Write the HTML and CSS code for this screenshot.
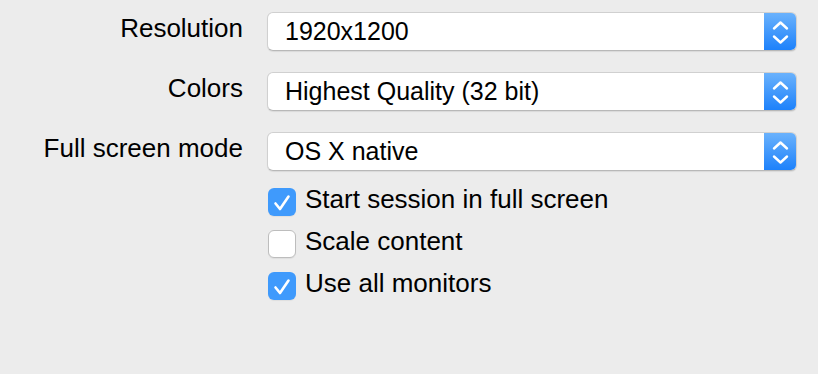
FILE: index.html
```html
<!DOCTYPE html>
<html>
<head>
<meta charset="utf-8">
<link rel="stylesheet" href="styles.css">
</head>
<body>
<div class="panel">
  <div class="form">
    <div class="label">Resolution</div>
    <div class="popup"><span class="value">1920x1200</span><span class="stepper"><svg width="33" height="39" viewBox="0 0 33 39"><path d="M10 16.5 L16.5 10.5 L23 16.5" fill="none" stroke="#fff" stroke-width="2.4" stroke-linecap="round" stroke-linejoin="round"/><path d="M10 24.5 L16.5 30.5 L23 24.5" fill="none" stroke="#fff" stroke-width="2.4" stroke-linecap="round" stroke-linejoin="round"/></svg></span></div>
    <div class="label">Colors</div>
    <div class="popup"><span class="value">Highest Quality (32 bit)</span><span class="stepper"><svg width="33" height="39" viewBox="0 0 33 39"><path d="M10 16.5 L16.5 10.5 L23 16.5" fill="none" stroke="#fff" stroke-width="2.4" stroke-linecap="round" stroke-linejoin="round"/><path d="M10 24.5 L16.5 30.5 L23 24.5" fill="none" stroke="#fff" stroke-width="2.4" stroke-linecap="round" stroke-linejoin="round"/></svg></span></div>
    <div class="label">Full screen mode</div>
    <div class="popup"><span class="value">OS X native</span><span class="stepper"><svg width="33" height="39" viewBox="0 0 33 39"><path d="M10 16.5 L16.5 10.5 L23 16.5" fill="none" stroke="#fff" stroke-width="2.4" stroke-linecap="round" stroke-linejoin="round"/><path d="M10 24.5 L16.5 30.5 L23 24.5" fill="none" stroke="#fff" stroke-width="2.4" stroke-linecap="round" stroke-linejoin="round"/></svg></span></div>
  </div>
  <div class="options">
    <div class="option"><span class="box checked"><svg width="28" height="28" viewBox="0 0 28 28"><path d="M7.5 15.5 L12 21 L20.5 8.5" fill="none" stroke="#fff" stroke-width="2.6" stroke-linecap="round" stroke-linejoin="round"/></svg></span><span class="text">Start session in full screen</span></div>
    <div class="option"><span class="box"></span><span class="text">Scale content</span></div>
    <div class="option"><span class="box checked"><svg width="28" height="28" viewBox="0 0 28 28"><path d="M7.5 15.5 L12 21 L20.5 8.5" fill="none" stroke="#fff" stroke-width="2.6" stroke-linecap="round" stroke-linejoin="round"/></svg></span><span class="text">Use all monitors</span></div>
  </div>
</div>
</body>
</html>
```
FILE: styles.css
```css
html, body {
  margin: 0;
  padding: 0;
  background: #ececec;
}
body {
  width: 818px;
  height: 374px;
  overflow: hidden;
  font-family: "Liberation Sans", Arial, Helvetica, sans-serif;
  color: #000;
}
.panel {
  padding-top: 12px;
}
.form {
  display: grid;
  grid-template-columns: 243px 530px;
  column-gap: 24px;
  row-gap: 21px;
  align-items: start;
}
.label {
  text-align: right;
  font-size: 26px;
  line-height: 20px;
  padding-top: 6px;
  white-space: nowrap;
}
.popup {
  box-sizing: border-box;
  height: 39px;
  display: flex;
  align-items: stretch;
  background: #fff;
  border: 1px solid #d0d0d0;
  border-bottom-color: #b8b8b8;
  border-radius: 6px;
  overflow: hidden;
  box-shadow: 0 1px 1px rgba(0,0,0,0.08);
}
.value {
  flex: 1;
  font-size: 25px;
  line-height: 37px;
  padding-left: 17px;
  white-space: nowrap;
}
.stepper {
  width: 33px;
  margin: -1px -1px -1px 0;
  background: linear-gradient(#6cb3fc, #1b80fb);
  border-radius: 0 6px 6px 0;
  display: flex;
  align-items: center;
  justify-content: center;
}
.stepper svg {
  display: block;
}
.options {
  padding-left: 268px;
  padding-top: 17px;
  display: flex;
  flex-direction: column;
  gap: 14px;
}
.option {
  display: flex;
  align-items: flex-start;
  gap: 9px;
}
.box {
  box-sizing: border-box;
  width: 28px;
  height: 28px;
  border-radius: 6px;
  background: #fff;
  border: 1px solid #bdbdbd;
  box-shadow: 0 1px 1px rgba(0,0,0,0.06);
  flex: none;
}
.box.checked {
  background: #3f9afc;
  border: none;
}
.box svg {
  display: block;
}
.text {
  font-size: 26px;
  line-height: 20px;
  padding-top: 1px;
  white-space: nowrap;
}
```
